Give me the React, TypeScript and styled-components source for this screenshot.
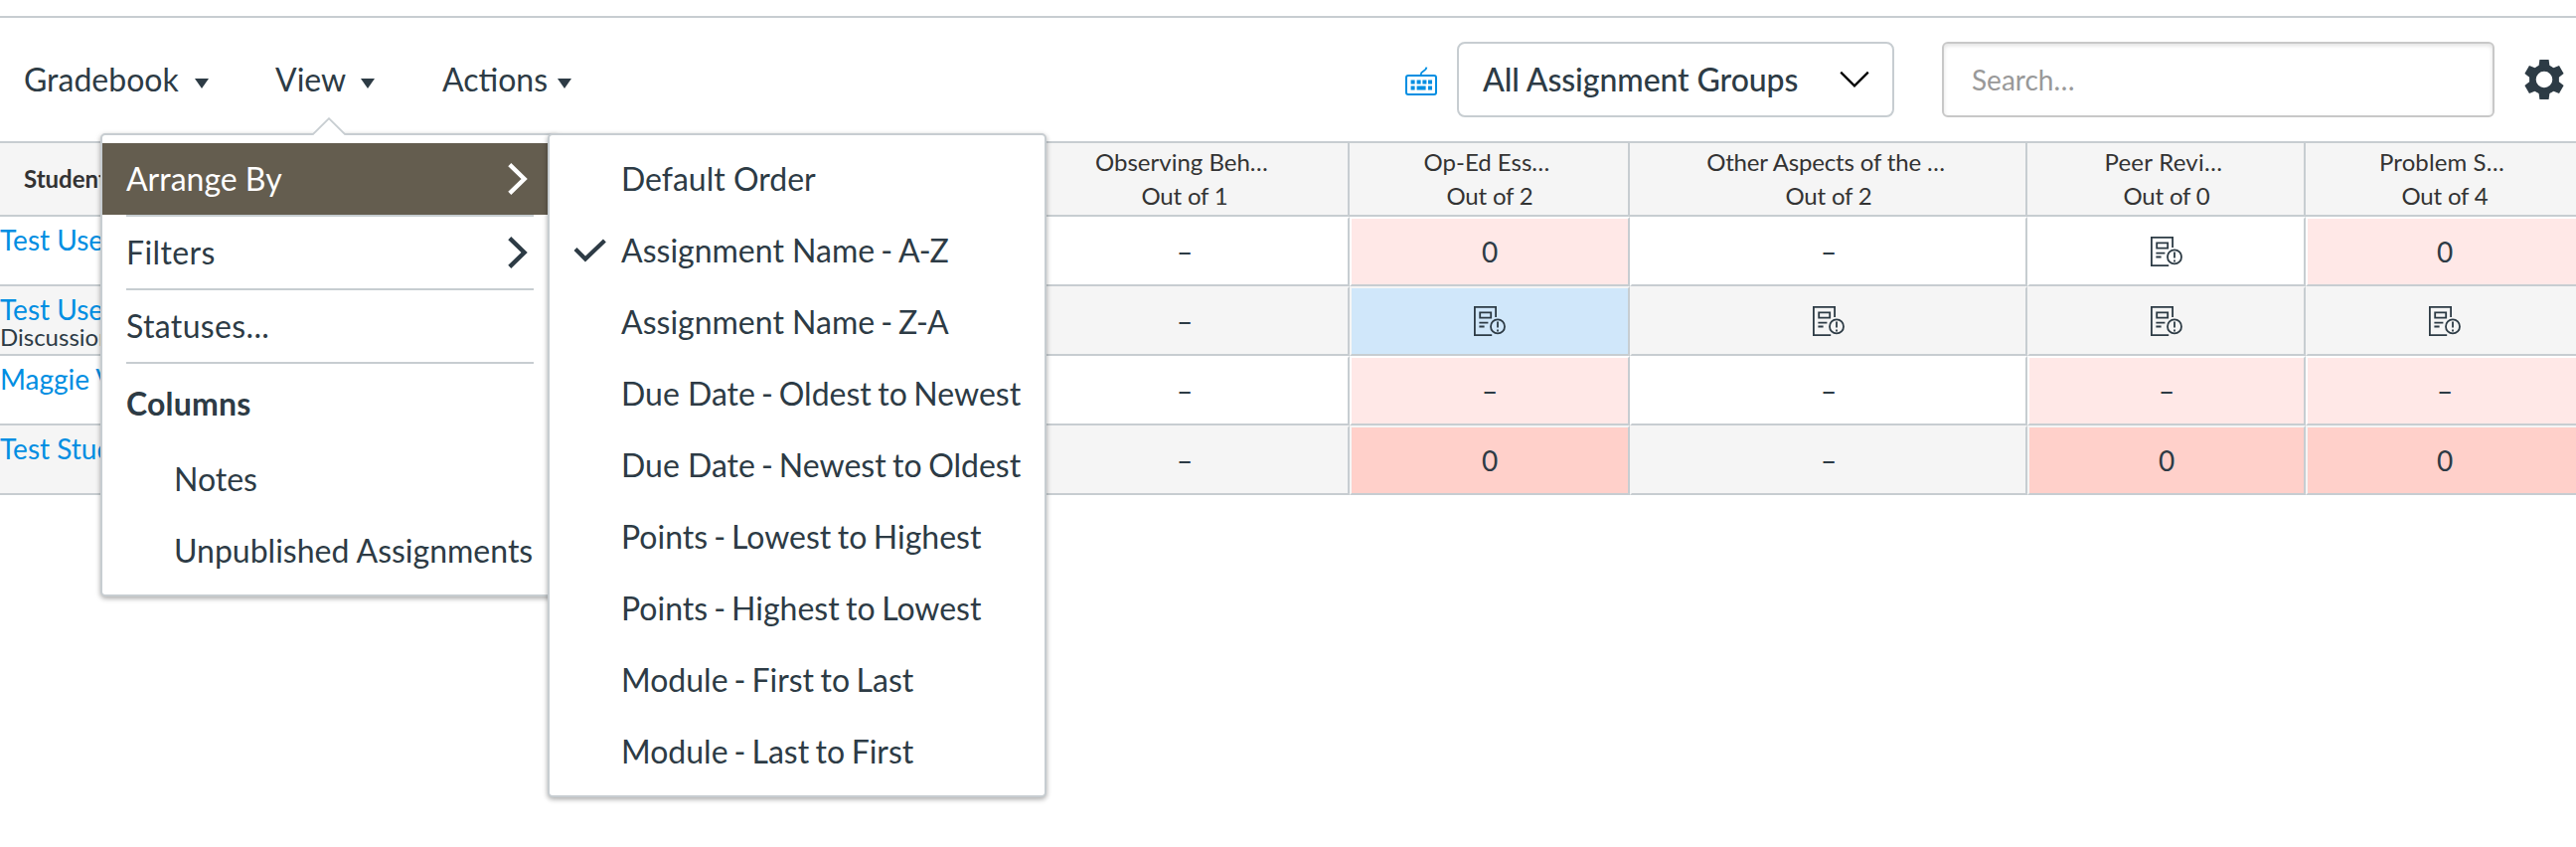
import React from 'react';
import styled, { createGlobalStyle, css } from 'styled-components';

const ink = '#2d3b45';
const line = '#c7cdd1';
const shade = '#f5f5f5';

const GlobalStyle = createGlobalStyle`
  *, *::before, *::after { box-sizing: border-box; }
  body {
    margin: 0;
    background: #fff;
    color: ${ink};
    font-family: Lato, "Liberation Sans", sans-serif;
    font-size: 32px;
    overflow: hidden;
  }
`;

const Page = styled.main`
  display: flex;
  flex-direction: column;
  width: 2592px;
  height: 852px;
  overflow: hidden;
  padding-top: 16px;
`;

const Toolbar = styled.header`
  display: flex;
  flex: none;
  align-items: center;
  justify-content: space-between;
  height: 126px;
  border-top: 2px solid ${line};
  padding: 0 12px 0 24px;
`;

const MenuBar = styled.nav`
  display: flex;
  align-items: center;
`;

const MenuAnchor = styled.div<{ $width: number }>`
  position: relative;
  width: ${(p) => p.$width}px;
`;

const MenuTrigger = styled.button<{ $gap: number }>`
  display: flex;
  align-items: center;
  gap: ${(p) => p.$gap}px;
  height: 76px;
  padding: 0;
  border: 0;
  background: none;
  color: inherit;
  font: inherit;
  line-height: 76px;

  svg { margin-top: 8px; }
`;

const Tools = styled.div`
  display: flex;
  align-items: center;
`;

const KeyboardButton = styled.span`
  display: flex;
  margin: 4px 20px 0 0;
`;

const GroupSelect = styled.div`
  display: flex;
  align-items: center;
  justify-content: space-between;
  width: 440px;
  height: 76px;
  margin-right: 48px;
  padding: 0 23px 2px 24px;
  border: 2px solid ${line};
  border-radius: 8px;
  font-weight: 500;
  letter-spacing: -0.08px;

  svg { margin-top: 2px; }
`;

const SearchInput = styled.input`
  width: 556px;
  height: 76px;
  margin-right: 30px;
  padding: 0 28px;
  border: 2px solid #c8c8c8;
  border-radius: 6px;
  box-shadow: inset 0 2px 4px rgba(0, 0, 0, 0.12);
  font: 28px Lato, "Liberation Sans", sans-serif;

  &::placeholder { color: #999; opacity: 1; }
`;

const panel = css`
  position: absolute;
  padding: 8px 0;
  border: 2px solid ${line};
  border-radius: 5px;
  background: #fff;
  box-shadow: 0 2px 6px rgba(0, 0, 0, 0.16), 0 2px 4px rgba(0, 0, 0, 0.2);
`;

const Popover = styled.div`
  ${panel}
  z-index: 2;
  top: 92px;
  left: -176px;
  width: 462px;
`;

const PopoverTip = styled.svg`
  position: absolute;
  top: -18px;
  left: 210px;
`;

const Submenu = styled.div`
  ${panel}
  top: -2px;
  left: 448px;
  width: 502px;
`;

const MenuItem = styled.div<{ $active?: boolean; $indent?: boolean; $tracking?: number }>`
  display: flex;
  align-items: center;
  justify-content: space-between;
  height: 72px;
  padding: 0 30px 2px ${(p) => (p.$indent ? 72 : 24)}px;
  background: ${(p) => (p.$active ? '#645d4f' : 'transparent')};
  color: ${(p) => (p.$active ? '#fff' : ink)};
  letter-spacing: ${(p) => p.$tracking ?? 0}px;
  white-space: nowrap;

  svg { margin-top: 2px; }
`;

const OptionItem = styled.div`
  display: grid;
  grid-template-columns: 48px auto;
  align-items: center;
  height: 72px;
  padding: 0 0 2px 24px;
  white-space: pre;

  svg { display: block; margin-top: 2px; }
`;

const Hyphen = styled.span`
  word-spacing: -2.2px;
`;

const Direction = styled.span<{ $tracking: number }>`
  letter-spacing: ${(p) => p.$tracking}px;
  word-spacing: -1.7px;
`;

const Divider = styled.hr`
  height: 2px;
  margin: 0 24px;
  border: 0;
  background: ${line};
`;

const GroupLabel = styled.div`
  height: 80px;
  padding-left: 24px;
  font-weight: 700;
  letter-spacing: 0.2px;
  line-height: 80px;
`;

const Grid = styled.section`
  flex: none;
  border-top: 2px solid ${line};
`;

const columns = css`
  display: grid;
  grid-template-columns: 1026px 332px 282px 400px 280px 280px;
`;

const HeaderRow = styled.div`
  ${columns}
  height: 74px;
  background: ${shade};
  color: #333;
  font-size: 24px;
`;

const HeaderCell = styled.div<{ $first?: boolean }>`
  display: flex;
  flex-direction: column;
  justify-content: center;
  align-items: ${(p) => (p.$first ? 'flex-start' : 'center')};
  border: solid ${line};
  border-width: 0 2px 2px 0;
  padding-left: ${(p) => (p.$first ? 24 : 2)}px;
  font-weight: ${(p) => (p.$first ? 700 : 400)};
  line-height: 34px;
  white-space: pre;
`;

const Title = styled.span<{ $tracking: number }>`
  letter-spacing: ${(p) => p.$tracking}px;
`;

const Points = styled.span`
  letter-spacing: -0.2px;
`;

const Row = styled.div<{ $striped: boolean }>`
  ${columns}
  height: 70px;
  background: ${(p) => (p.$striped ? shade : '#fff')};
`;

type Tone = 'none' | 'missing' | 'missingDark' | 'late';
const tones: Record<Tone, string> = {
  none: 'transparent',
  missing: '#ffe8e7',
  missingDark: '#ffd0ca',
  late: '#d0e7fa',
};

const GradeCell = styled.div<{ $tone: Tone }>`
  display: flex;
  align-items: center;
  justify-content: center;
  border: 2px solid;
  border-color: transparent ${line} ${line} transparent;
  background: ${(p) => tones[p.$tone]};
  background-clip: padding-box;
  font-size: 28px;
`;

const StudentCell = styled.div`
  display: flex;
  flex-direction: column;
  padding-top: 7px;
  border-right: 2px solid ${line};
  border-bottom: 2px solid ${line};
  white-space: nowrap;
`;

const StudentName = styled.a`
  color: #008ee2;
  font-size: 28px;
  line-height: 32px;
`;

const SectionName = styled.span`
  font-size: 24px;
  line-height: 24px;
`;

const Caret = () => (
  <svg width="14" height="10" viewBox="0 0 14 10" fill={ink}>
    <path d="M0 0h14L7 10z" />
  </svg>
);

const FlyoutArrow = () => (
  <svg width="20" height="32" viewBox="0 0 20 32" fill="none" stroke="currentColor" strokeWidth="4.4">
    <path d="M1.8 1.6 16.6 16 1.8 30.4" />
  </svg>
);

const Check = () => (
  <svg width="34" height="24" viewBox="0 0 34 24" fill="none" stroke={ink} strokeWidth="4.2">
    <path d="M2 10.5 12 20.5 31.4 2" />
  </svg>
);

const SelectChevron = () => (
  <svg width="30" height="18" viewBox="0 0 30 18" fill="none" stroke="#000" strokeWidth="2.2">
    <path d="M1.2 1.6 15 15.4 28.8 1.6" />
  </svg>
);

const Keyboard = () => (
  <svg width="32" height="30" viewBox="0 0 32 30" fill="#008ee2">
    <path d="M15.8 9V7.6c0-3.6 5.4-2.6 5.6-7" fill="none" stroke="#008ee2" strokeWidth="1.8" />
    <rect x="1" y="9" width="30" height="19" rx="2" fill="none" stroke="#008ee2" strokeWidth="2" />
    <path d="M5.6 13.6h4v4h-4zM11.6 13.6h4v4h-4zM17.4 13.6h4v4h-4zM23 13.6h4v4h-4zM5.6 19.4h4v4h-4zM11.6 19.4h9v4h-9zM23 19.4h4v4h-4z" />
  </svg>
);

const Gear = () => (
  <svg width="40" height="40" viewBox="-20 -20 40 40" fill={ink}>
    <circle r="11.6" fill="none" stroke={ink} strokeWidth="6.6" />
    {[0, 60, 120, 180, 240, 300].map((a) => (
      <path key={a} d="M-4.6-20h9.2l.8 6 2.2 2.6H-7.6l2.2-2.6z" transform={`rotate(${a})`} />
    ))}
  </svg>
);

const NeedsGrading = () => (
  <svg width="32" height="32" viewBox="0 0 32 32" fill="none" stroke={ink} strokeWidth="1.8">
    <path d="M22.1 12V1.9H.9v28.2h17.3" />
    <path d="M6.2 7.4h11v5.2h-11zM5.4 17.7h9M5.4 21.5h5.2M24 16.6v6M24 24.4v2" />
    <circle cx="24" cy="21.4" r="7" />
  </svg>
);

const orderOptions: { field: string; direction?: string; tracking?: number; selected?: boolean }[] = [
  { field: 'Default Order' },
  { field: 'Assignment Name', direction: 'A-Z', tracking: -1, selected: true },
  { field: 'Assignment Name', direction: 'Z-A', tracking: -1 },
  { field: 'Due Date', direction: 'Oldest to Newest' },
  { field: 'Due Date', direction: 'Newest to Oldest' },
  { field: 'Points', direction: 'Lowest to Highest' },
  { field: 'Points', direction: 'Highest to Lowest' },
  { field: 'Module', direction: 'First to Last' },
  { field: 'Module', direction: 'Last to First' },
];

const assignments = [
  { title: 'Observing Beh… ', points: 'Out of 1', tracking: 0 },
  { title: 'Op-Ed Ess… ', points: 'Out of 2', tracking: 0 },
  { title: 'Other Aspects of the … ', points: 'Out of 2', tracking: -0.15 },
  { title: 'Peer Revi… ', points: 'Out of 0', tracking: 0.25 },
  { title: 'Problem S… ', points: 'Out of 4', tracking: 0.1 },
];

type Grade = { value: string; tone?: Tone };
const dash: Grade = { value: '–' };
const pending: Grade = { value: 'pending' };

const students: { name: string; section?: string; grades: Grade[] }[] = [
  { name: 'Test User', grades: [dash, { value: '0', tone: 'missing' }, dash, pending, { value: '0', tone: 'missing' }] },
  { name: 'Test User', section: 'Discussion', grades: [dash, { value: 'pending', tone: 'late' }, pending, pending, pending] },
  { name: 'Maggie V', grades: [dash, { value: '–', tone: 'missing' }, dash, { value: '–', tone: 'missing' }, { value: '–', tone: 'missing' }] },
  { name: 'Test Student', grades: [dash, { value: '0', tone: 'missingDark' }, dash, { value: '0', tone: 'missingDark' }, { value: '0', tone: 'missingDark' }] },
];

const ViewMenu = () => (
  <Popover>
    <PopoverTip width="36" height="20" viewBox="0 0 36 20">
      <path d="M1.6 18 18 1.4 34.4 18v2H1.6z" fill="#fff" />
      <path d="M1.6 17.4 18 1.2l16.4 16.2" fill="none" stroke={line} strokeWidth="1.8" />
    </PopoverTip>
    <MenuItem $active>Arrange By<FlyoutArrow /></MenuItem>
    <Divider />
    <MenuItem $tracking={0.4}>Filters<FlyoutArrow /></MenuItem>
    <Divider />
    <MenuItem $tracking={0.35}>Statuses...</MenuItem>
    <Divider />
    <GroupLabel>Columns</GroupLabel>
    <MenuItem $indent>Notes</MenuItem>
    <MenuItem $indent>Unpublished Assignments</MenuItem>
    <Submenu>
      {orderOptions.map((o, i) => (
        <OptionItem key={i}>
          <span>{o.selected && <Check />}</span>
          <span>
            {o.field}
            {o.direction && <Hyphen>{' - '}</Hyphen>}
            {o.direction && <Direction $tracking={o.tracking ?? 0}>{o.direction}</Direction>}
          </span>
        </OptionItem>
      ))}
    </Submenu>
  </Popover>
);

export default function App() {
  return (
    <Page>
      <GlobalStyle />
      <Toolbar>
        <MenuBar>
          <MenuAnchor $width={253}>
            <MenuTrigger $gap={16}>Gradebook<Caret /></MenuTrigger>
          </MenuAnchor>
          <MenuAnchor $width={168}>
            <MenuTrigger $gap={15}>View<Caret /></MenuTrigger>
            <ViewMenu />
          </MenuAnchor>
          <MenuAnchor $width={140}>
            <MenuTrigger $gap={10}>Actions<Caret /></MenuTrigger>
          </MenuAnchor>
        </MenuBar>
        <Tools>
          <KeyboardButton><Keyboard /></KeyboardButton>
          <GroupSelect>All Assignment Groups<SelectChevron /></GroupSelect>
          <SearchInput placeholder="Search…" />
          <Gear />
        </Tools>
      </Toolbar>
      <Grid>
        <HeaderRow>
          <HeaderCell $first>Student</HeaderCell>
          {assignments.map((a) => (
            <HeaderCell key={a.title}>
              <Title $tracking={a.tracking}>{a.title}</Title>
              <Points>{a.points}</Points>
            </HeaderCell>
          ))}
        </HeaderRow>
        {students.map((s, r) => (
          <Row key={r} $striped={r % 2 === 1}>
            <StudentCell>
              <StudentName>{s.name}</StudentName>
              {s.section && <SectionName>{s.section}</SectionName>}
            </StudentCell>
            {s.grades.map((g, c) => (
              <GradeCell key={c} $tone={g.tone ?? 'none'}>
                {g.value === 'pending' ? <NeedsGrading /> : g.value}
              </GradeCell>
            ))}
          </Row>
        ))}
      </Grid>
    </Page>
  );
}
